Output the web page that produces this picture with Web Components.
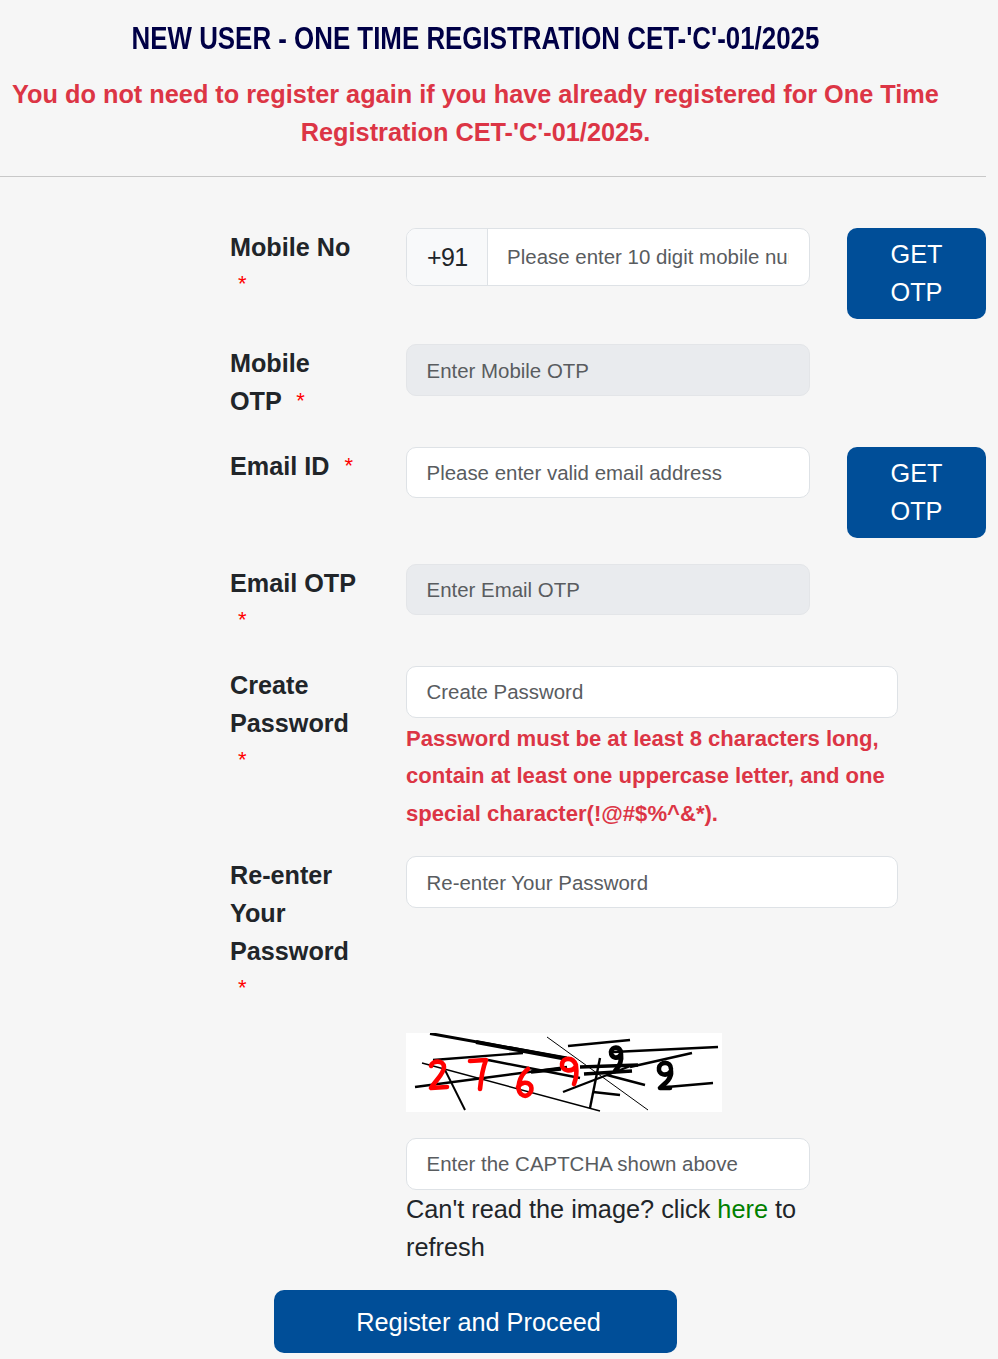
<!DOCTYPE html>
<html lang="en">
<head>
<meta charset="utf-8">
<title>One Time Registration</title>
<style>
  html, body { margin: 0; padding: 0; background: #f6f6f6; }
  body { font-family: "Liberation Sans", Arial, sans-serif; color: #212529; }
</style>
</head>
<body>
<reg-header></reg-header>
<reg-form></reg-form>

<script>
class RegHeader extends HTMLElement {
  constructor() {
    super();
    this.attachShadow({ mode: "open" });
    this.shadowRoot.innerHTML = `
      <style>
        :host { display: block; width: 986px; }
        .head { padding-right: 35px; }
        h1 { margin: 0; padding-top: 20px; text-align: center; font-size: 31px; line-height: 38px; font-weight: 700; color: #000046; white-space: nowrap; transform: scaleX(.835); }
        p { margin: 17px 0 0; text-align: center; font-size: 25.3px; line-height: 38px; font-weight: 700; color: #dc3545; }
        hr { margin: 25px 0 0; border: 0; border-top: 1px solid #c8c8c8; }
      </style>
      <div class="head">
        <h1>NEW USER - ONE TIME REGISTRATION CET-'C'-01/2025</h1>
        <p>You do not need to register again if you have already registered for One Time Registration CET-'C'-01/2025.</p>
      </div>
      <hr>`;
  }
}

class FormRow extends HTMLElement {
  constructor() {
    super();
    this.attachShadow({ mode: "open" });
    this.shadowRoot.innerHTML = `
      <style>
        :host { display: grid; grid-template-columns: 176px 492px 88px; padding-left: 230px; width: 756px; }
        .label { width: 130px; font-size: 25.2px; line-height: 38px; font-weight: 700; color: #212529; }
      </style>
      <div class="label"><slot name="label"></slot></div>
      <div><slot></slot></div>
      <div><slot name="side"></slot></div>`;
  }
}

class TextBox extends HTMLElement {
  constructor() {
    super();
    this.attachShadow({ mode: "open" });
    const prefix = this.getAttribute("prefix");
    const wide = this.hasAttribute("wide");
    const off = this.hasAttribute("disabled");
    this.shadowRoot.innerHTML = `
      <style>
        :host { display: block; width: ${wide ? 492 : 404}px; }
        .box { display: flex; height: var(--h, 52px); box-sizing: border-box; border: 1px solid ${off ? "#e3e5e8" : "#dee2e6"}; border-radius: 10px; background: ${off ? "#e9ebee" : "#fff"}; font-size: 20.45px; overflow: hidden; }
        .pre { display: flex; align-items: center; padding: 0 19px 0 20px; background: #f8f9fa; border-right: 1px solid #dee2e6; font-size: 25px; letter-spacing: -0.6px; color: #212529; }
        input { flex: 1; min-width: 0; border: 0; outline: 0; background: transparent; padding: var(--pt, 0) 20.5px 0 19.5px; font: inherit; color: #212529; }
        input::placeholder { color: #595c5f; opacity: 1; }
        :host([prefix]) .box { height: 58px; }
      </style>
      <div class="box">
        ${prefix ? `<span class="pre">${prefix}</span>` : ""}
        <input type="text" placeholder="${this.getAttribute("placeholder")}" ${off ? "disabled" : ""}>
      </div>`;
  }
}

class BlueButton extends HTMLElement {
  constructor() {
    super();
    this.attachShadow({ mode: "open" });
    this.shadowRoot.innerHTML = `
      <style>
        :host { display: inline-block; }
        button { display: block; width: 100%; border: 0; border-radius: 10px; background: #004e98; color: #fff; font: 400 25.3px/37.5px "Liberation Sans", Arial, sans-serif; padding: var(--pad-top, 8px) 32px var(--pad-bottom, 8px) var(--pad-left, 32px); cursor: pointer; }
      </style>
      <button><slot></slot></button>`;
  }
}

class CaptchaPic extends HTMLElement {
  constructor() {
    super();
    this.attachShadow({ mode: "open" });
    this.shadowRoot.innerHTML = `
      <style>
        :host { display: block; width: 316px; height: 79px; background: #fff; overflow: hidden; }
        svg { display: block; filter: blur(0.35px); }
        line { stroke: #000; }
        path { fill: none; stroke-width: 4.6; stroke-linecap: round; stroke-linejoin: round; }
      </style>
      <svg width="316" height="79" viewBox="0 0 316 79">
        <g>
          <line x1="24" y1="0.5" x2="161" y2="25" stroke-width="3"/>
          <line x1="70" y1="9" x2="161" y2="26" stroke-width="4"/>
          <line x1="27" y1="27" x2="117" y2="20" stroke-width="2.4"/>
          <line x1="82" y1="27" x2="174" y2="45" stroke-width="2.4"/>
          <line x1="162" y1="13" x2="224" y2="7" stroke-width="2.6"/>
          <line x1="207" y1="19" x2="312" y2="14" stroke-width="2.6"/>
          <line x1="224" y1="34" x2="286" y2="20" stroke-width="2.6"/>
          <line x1="9" y1="54" x2="161" y2="34" stroke-width="2.6"/>
          <line x1="125" y1="39" x2="155" y2="36" stroke-width="3.6"/>
          <line x1="157" y1="59" x2="227" y2="32" stroke-width="2.4"/>
          <line x1="174" y1="34" x2="232" y2="32" stroke-width="3.6"/>
          <line x1="178" y1="41" x2="226" y2="38" stroke-width="3.6"/>
          <line x1="16" y1="30" x2="194" y2="78" stroke-width="1.4"/>
          <line x1="39" y1="37" x2="59" y2="77" stroke-width="2"/>
          <line x1="141" y1="4" x2="242" y2="77" stroke-width="1"/>
          <line x1="194" y1="25" x2="184" y2="75" stroke-width="2.4"/>
          <line x1="187" y1="59" x2="214" y2="62" stroke-width="2.4"/>
          <line x1="261" y1="54" x2="307" y2="50" stroke-width="2.6"/>
          <line x1="201" y1="42" x2="239" y2="52" stroke-width="2.4"/>
        </g>
        <path stroke="#f00" d="M25 33 C26 27 38 27 38 34 C38 41 29 48 25 55 L41 54"/>
        <path stroke="#f00" d="M64 28 L80 27 C76 37 75 46 74 56"/>
        <path stroke="#f00" d="M122 36 C113 43 110 56 115 61 C121 66 127 59 125 53 C122 48 115 49 112 54"/>
        <path stroke="#f00" d="M170 32 C167 24 157 24 156 31 C155 38 166 40 170 33 C171 40 170 46 168 51"/>
        <path stroke="#000" d="M215 20 C214 13 206 13 205 19 C205 25 212 27 215 21 C216 28 213 34 209 38"/>
        <path stroke="#000" d="M265 36 C265 28 254 28 253 35 C252 42 261 44 265 38 C266 45 260 50 254 55 L264 55"/>
      </svg>`;
  }
}

class RegForm extends HTMLElement {
  constructor() {
    super();
    this.attachShadow({ mode: "open" });
    const starStyle = "color:#f00;font-weight:400;font-size:22px;line-height:0;margin-left:8px;";
    const star = `<span style="${starStyle}vertical-align:3px">*</span>`;
    const inlineStar = `<span style="${starStyle}vertical-align:2px">*</span>`;
    this.shadowRoot.innerHTML = `
      <style>
        :host { display: block; padding-top: 51px; }
        .side { display: block; width: 139px; margin-left: -51px; }
        .pw { color: #dc3545; font-size: 22.1px; line-height: 37.5px; font-weight: 700; margin-top: 1.5px; }
        .hint { display: block; width: 404px; font-size: 25.3px; line-height: 38px; color: #212529; }
        .hint a { color: #008000; text-decoration: none; }
        .center { display: flex; justify-content: center; width: 951px; margin-top: 24px; }
        .center blue-button { width: 403px; --pad-top: 14px; --pad-bottom: 11.5px; --pad-left: 38px; }
      </style>
      <form-row style="height:116px">
        <span slot="label">Mobile No<br>${star}</span>
        <text-box prefix="+91" placeholder="Please enter 10 digit mobile number"></text-box>
        <blue-button slot="side" class="side">GET OTP</blue-button>
      </form-row>
      <form-row style="height:103px">
        <span slot="label">Mobile<br>OTP ${inlineStar}</span>
        <text-box disabled style="--pt:1px" placeholder="Enter Mobile OTP"></text-box>
      </form-row>
      <form-row style="height:117px">
        <span slot="label" style="white-space:nowrap">Email ID ${inlineStar}</span>
        <text-box style="--h:51px" placeholder="Please enter valid email address"></text-box>
        <blue-button slot="side" class="side">GET OTP</blue-button>
      </form-row>
      <form-row style="height:102px">
        <span slot="label" style="white-space:nowrap">Email OTP<br>${star}</span>
        <text-box disabled style="--h:51px" placeholder="Enter Email OTP"></text-box>
      </form-row>
      <form-row style="height:190px">
        <span slot="label">Create<br>Password<br>${star}</span>
        <div>
          <text-box wide placeholder="Create Password"></text-box>
          <div class="pw">Password must be at least 8 characters long,<br>contain at least one uppercase letter, and one<br>special character(!@#$%^&amp;*).</div>
        </div>
      </form-row>
      <form-row style="height:177px">
        <span slot="label">Re-enter<br>Your<br>Password<br>${star}</span>
        <text-box wide style="--pt:1px" placeholder="Re-enter Your Password"></text-box>
      </form-row>
      <form-row style="height:105px">
        <captcha-pic></captcha-pic>
      </form-row>
      <form-row>
        <div>
          <text-box style="--h:51.5px" placeholder="Enter the CAPTCHA shown above"></text-box>
          <span class="hint">Can't read the image? click <a href="#">here</a> to<br>refresh</span>
        </div>
      </form-row>
      <div class="center"><blue-button>Register and Proceed</blue-button></div>`;
  }
}

customElements.define("reg-header", RegHeader);
customElements.define("form-row", FormRow);
customElements.define("text-box", TextBox);
customElements.define("blue-button", BlueButton);
customElements.define("captcha-pic", CaptchaPic);
customElements.define("reg-form", RegForm);
</script>
</body>
</html>
